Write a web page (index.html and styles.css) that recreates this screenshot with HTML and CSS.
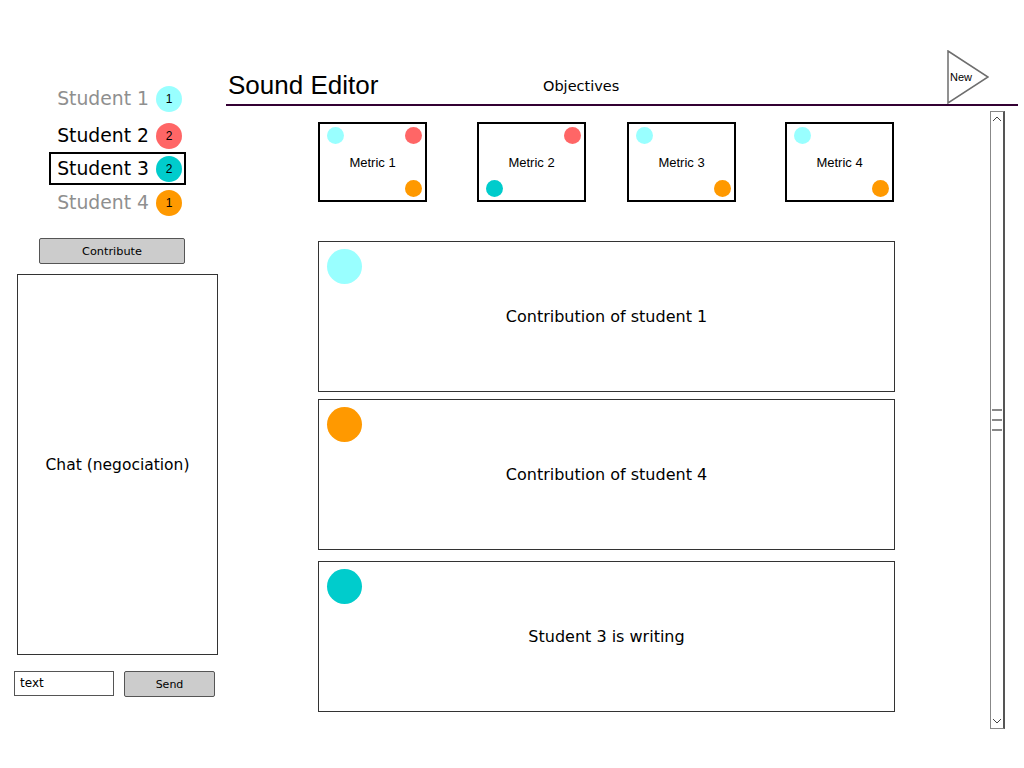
FILE: index.html
```html
<!DOCTYPE html>
<html>
<head>
<meta charset="utf-8">
<link rel="stylesheet" href="styles.css">
</head>
<body>
<div class="app">
  <aside class="side">
    <div class="students">
      <div class="student dim s1"><span class="sname">Student 1</span><span class="badge cyan">1</span></div>
      <div class="student s2"><span class="sname">Student 2</span><span class="badge red">2</span></div>
      <div class="student active s3"><span class="sname">Student 3</span><span class="badge teal">2</span></div>
      <div class="student dim s4"><span class="sname">Student 4</span><span class="badge orange">1</span></div>
    </div>
    <div class="btn contribute">Contribute</div>
    <div class="chat">Chat (negociation)</div>
    <div class="sendrow">
      <div class="textbox">text</div>
      <div class="btn send">Send</div>
    </div>
  </aside>
  <main class="main">
    <header class="header">
      <h1 class="title">Sound Editor</h1>
      <div class="objectives">Objectives</div>
      <div class="newbtn">
        <svg width="42" height="54" viewBox="0 0 42 54"><polygon points="1,1 41,27 1,53" fill="#fff" stroke="#6e6e6e" stroke-width="1.5"/></svg>
        <span class="newlabel">New</span>
      </div>
    </header>
    <div class="body">
      <div class="canvas">
        <div class="metrics">
          <div class="metric m1">Metric 1<span class="dot cyan tl"></span><span class="dot red tr"></span><span class="dot orange br"></span></div>
          <div class="metric m2">Metric 2<span class="dot red tr"></span><span class="dot teal bl"></span></div>
          <div class="metric m3">Metric 3<span class="dot cyan tl"></span><span class="dot orange br"></span></div>
          <div class="metric m4">Metric 4<span class="dot cyan tl"></span><span class="dot orange br"></span></div>
        </div>
        <div class="contribs">
          <div class="contrib c1"><span class="bigdot cyan"></span>Contribution of student 1</div>
          <div class="contrib c2"><span class="bigdot orange"></span>Contribution of student 4</div>
          <div class="contrib c3"><span class="bigdot teal"></span>Student 3 is writing</div>
        </div>
      </div>
      <div class="scrollbar">
        <svg class="arrow up" width="12" height="10" viewBox="0 0 12 10"><polyline points="2,7 6,3 10,7" fill="none" stroke="#444" stroke-width="1"/></svg>
        <div class="grip"><span></span><span></span><span></span></div>
        <svg class="arrow down" width="12" height="10" viewBox="0 0 12 10"><polyline points="2,3 6,7 10,3" fill="none" stroke="#444" stroke-width="1"/></svg>
      </div>
    </div>
  </main>
</div>
</body>
</html>
```
FILE: styles.css
```css
* { box-sizing: border-box; }
html, body { margin: 0; padding: 0; background: #fff; }
body { font-family: "DejaVu Sans", sans-serif; color: #000; }
.app { display: flex; width: 1024px; height: 768px; overflow: hidden; }

.side { width: 226px; flex: none; display: flex; flex-direction: column; padding-top: 82px; }
.students { margin-left: 49px; width: 137px; display: flex; flex-direction: column; }
.student { height: 33px; display: flex; align-items: center; justify-content: flex-end; gap: 7px; padding-right: 4px; font-size: 18.8px; }
.student.s2 { margin-top: 4px; }
.student.s4 { margin-top: 1px; }
.student.dim .sname { color: #8f8f8f; }
.student.active { border: 2px solid #000; padding-right: 2px; }
.badge { width: 26px; height: 26px; border-radius: 50%; display: flex; align-items: center; justify-content: center; font-family: "Liberation Sans", sans-serif; font-size: 12px; color: #000; }

.cyan { background: #99ffff; }
.red { background: #ff6666; }
.teal { background: #00cccc; }
.orange { background: #ff9900; }

.btn { background: #cccccc; border: 1px solid #555; border-radius: 2px; display: flex; align-items: center; justify-content: center; font-size: 11px; }
.contribute { margin-top: 19px; margin-left: 39px; width: 146px; height: 26px; font-size: 11.3px; }
.chat { margin-top: 10px; margin-left: 17px; width: 201px; height: 381px; border: 1px solid #333; display: flex; align-items: center; justify-content: center; font-size: 15.5px; }
.sendrow { margin-top: 16px; margin-left: 14px; display: flex; gap: 10px; }
.textbox { width: 100px; height: 25px; border: 1px solid #555; padding: 4px 0 0 5px; font-size: 12px; }
.send { width: 91px; height: 26px; }

.main { width: 792px; flex: none; padding-top: 50px; }
.header { height: 56px; border-bottom: 2px solid #330033; display: flex; align-items: flex-start; }
.title { margin: 20px 0 0 0; padding-left: 2px; width: 317px; font-family: "Liberation Sans", Arial, sans-serif; font-weight: normal; font-size: 26px; line-height: 30px; }
.objectives { margin-top: 26px; font-size: 14.5px; line-height: 20px; }
.newbtn { position: relative; margin-left: auto; margin-right: 29px; width: 42px; height: 54px; }
.newbtn svg { display: block; }
.newlabel { position: absolute; left: 3px; top: 21px; font-family: "Liberation Sans", Arial, sans-serif; font-size: 11px; }

.body { display: flex; align-items: flex-start; }
.canvas { padding-left: 92px; padding-top: 16px; width: 668px; }
.metrics { width: 576px; display: flex; }
.metric { position: relative; width: 109px; height: 80px; border: 2px solid #000; display: flex; align-items: center; justify-content: center; font-family: "Liberation Sans", Arial, sans-serif; font-size: 13px; }
.metric.m2 { margin-left: 50px; }
.metric.m3 { margin-left: 41px; }
.metric.m4 { margin-left: 49px; }
.dot { position: absolute; width: 17px; height: 17px; border-radius: 50%; }
.dot.tl { left: 7px; top: 3px; }
.dot.tr { right: 3px; top: 3px; }
.dot.br { right: 3px; bottom: 3px; }
.dot.bl { left: 7px; bottom: 3px; }

.contribs { margin-top: 39px; width: 577px; display: flex; flex-direction: column; }
.contrib { position: relative; height: 151px; border: 1px solid #333; display: flex; align-items: center; justify-content: center; font-size: 16px; }
.contrib.c2 { margin-top: 7px; }
.contrib.c3 { margin-top: 11px; }
.bigdot { position: absolute; left: 8px; top: 7px; width: 35px; height: 35px; border-radius: 50%; }

.scrollbar { margin-top: 5px; margin-left: 96px; width: 15px; height: 618px; border: 1px solid #888; border-right: 2px solid #555; display: flex; flex-direction: column; align-items: center; justify-content: space-between; padding: 2px 0; }
.arrow { display: block; }
.grip { display: flex; flex-direction: column; gap: 8px; }
.grip span { display: block; width: 10px; height: 2px; background: #888; }
```
